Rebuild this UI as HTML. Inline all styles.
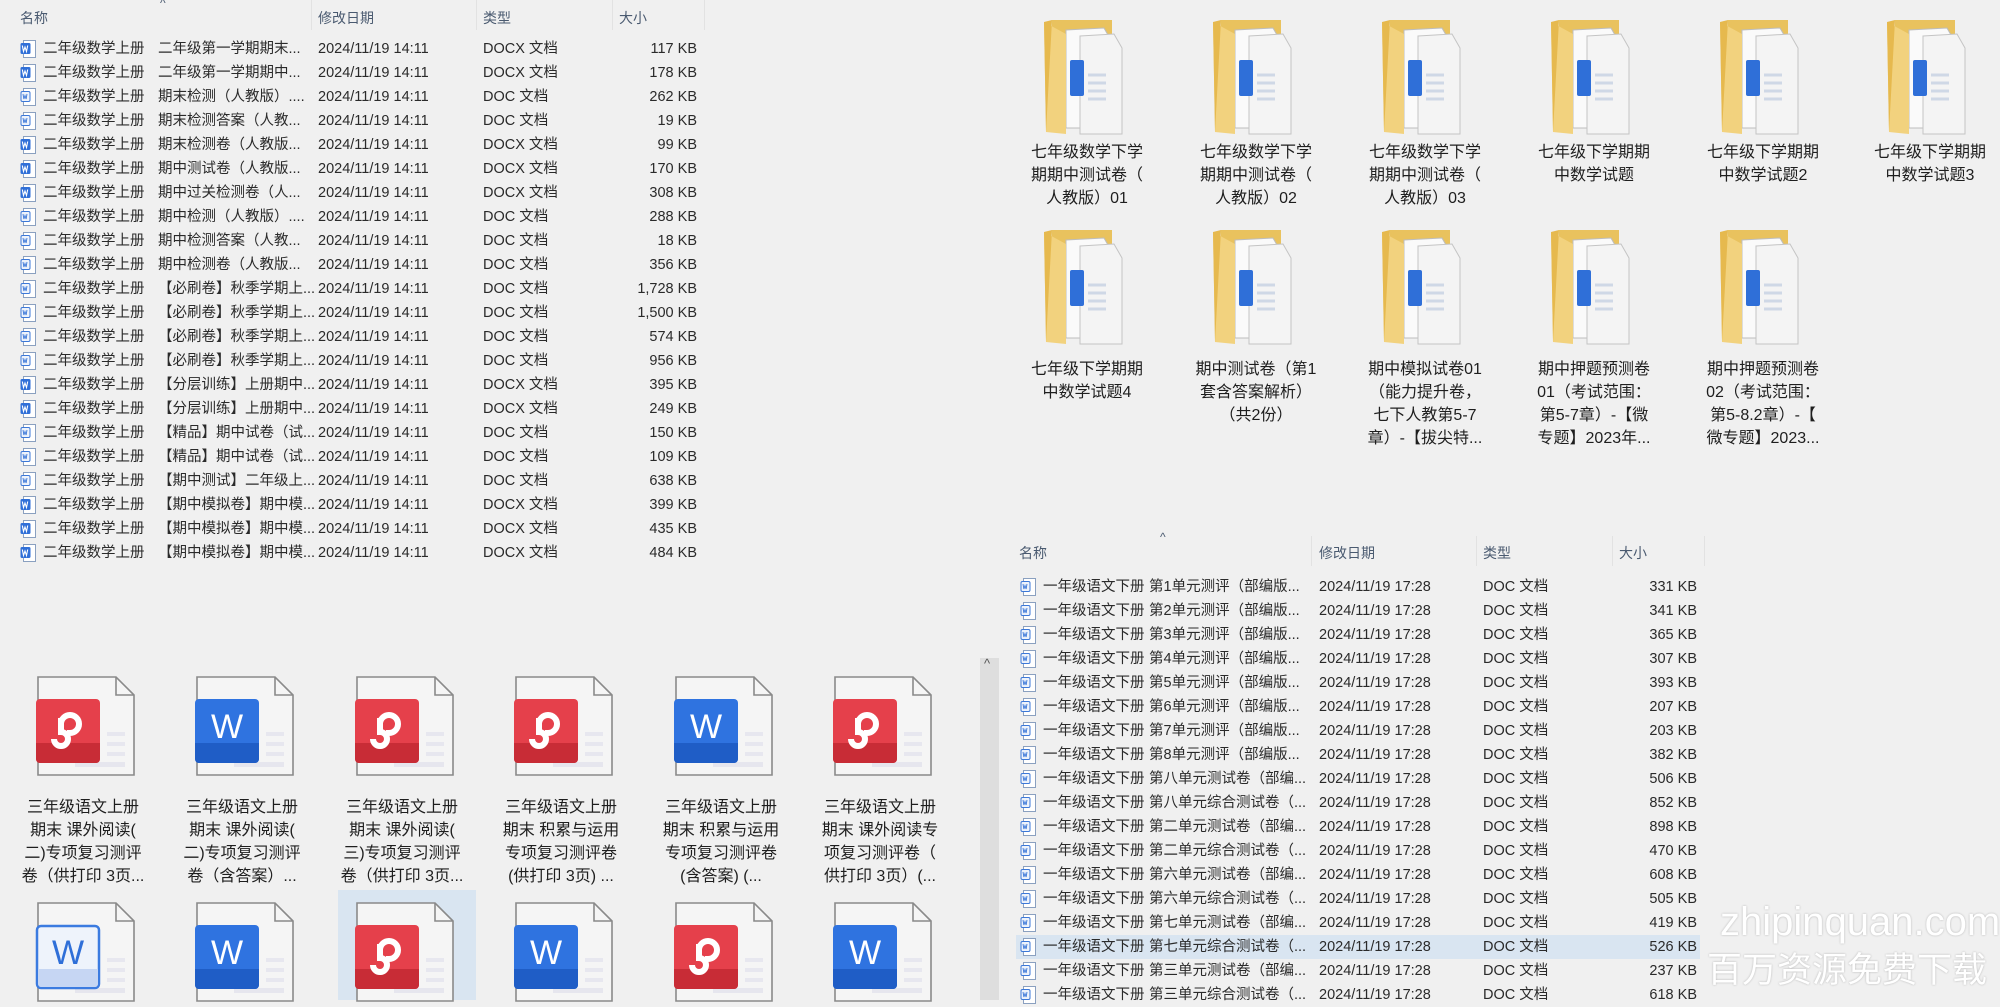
<!DOCTYPE html>
<html><head><meta charset="utf-8"><style>
body{margin:0;width:2000px;height:1000px;background:#f0f0f0;position:relative;overflow:hidden;font-family:"Liberation Sans","Noto Sans CJK SC",sans-serif;color:#222}
.a{position:absolute;white-space:nowrap}
.h{font-size:14px;color:#4a5a70}
.sep{position:absolute;width:1px;background:#e2e2e2}
.r{position:absolute;height:24px;line-height:24px;font-size:14.5px;color:#2a2a2a}
.r span{position:absolute;white-space:nowrap}
.r svg{position:absolute;top:3px}
.lbl{position:absolute;width:160px;text-align:center;font-size:16px;line-height:23px;color:#1e1e1e}
</style></head><body>
<svg width="0" height="0" style="position:absolute">
<defs>
<symbol id="dx" viewBox="0 0 16 18"><rect x="3.5" y="0.5" width="12" height="17" fill="#fff" stroke="#8aa0c0"/><rect x="0.5" y="3" width="10" height="11" rx="1.5" fill="#2f6fd8"/><path d="M2.3 5.5l1.2 6 1.5-4.5 1.5 4.5 1.2-6" stroke="#fff" stroke-width="1.1" fill="none"/></symbol>
<symbol id="dc" viewBox="0 0 16 18"><rect x="3.5" y="0.5" width="12" height="17" fill="#fff" stroke="#8aa0c0"/><rect x="1" y="3.5" width="9" height="10" rx="1.5" fill="#eef3fb" stroke="#3c78d8"/><path d="M3 6l.9 5 1.1-3.5 1.1 3.5.9-5" stroke="#3c78d8" stroke-width="0.9" fill="none"/></symbol>
<symbol id="fd" viewBox="0 0 86 115"><path d="M8 0h60v108H8z" fill="#e9c25e"/><path d="M22 10l38-2 8 14v86H22z" fill="#fafafa" stroke="#bdbdbd"/><path d="M36 16l34-2 8 14v86H36z" fill="#f4f4f4" stroke="#c4c4c4"/><rect x="26" y="40" width="14" height="36" rx="2" fill="#2f6fd8"/><path d="M44 55h18M44 63h18M44 71h18M44 79h18" stroke="#cfd8e6" stroke-width="3"/><path d="M0 2l22 12v100L2 112z" fill="#f2d27e"/><path d="M8 0L0 2l2 110z" fill="#e6b94e"/></symbol>
<symbol id="pg" viewBox="0 0 100 100"><path d="M3 1h78l18 18v80H3z" fill="#f5f5f5" stroke="#8a8a8a" stroke-width="1.6"/><path d="M81 1v18h18" fill="none" stroke="#8a8a8a" stroke-width="1.6"/><rect x="72" y="56" width="18" height="4" fill="#e7e7ef"/><rect x="72" y="66" width="18" height="4" fill="#e7e7ef"/><rect x="72" y="76" width="18" height="4" fill="#e7e7ef"/><rect x="40" y="86" width="50" height="5" fill="#e6e6ee"/></symbol>
<symbol id="bp" viewBox="0 0 100 100"><use href="#pg"/><rect x="1" y="23" width="64" height="64" rx="4" fill="#e5404b"/><path d="M1 67h64v16a4 4 0 0 1-4 4H5a4 4 0 0 1-4-4z" fill="#c82c36"/><path d="M26 48a9 9 0 1 1 9 9h-3M26 42v14a7 7 0 1 1-7 7" fill="none" stroke="#fff" stroke-width="6"/></symbol>
<symbol id="bw" viewBox="0 0 100 100"><use href="#pg"/><rect x="1" y="23" width="64" height="64" rx="4" fill="#2f73e0"/><path d="M1 67h64v16a4 4 0 0 1-4 4H5a4 4 0 0 1-4-4z" fill="#1f5dc6"/><text x="33" y="62" font-family="Liberation Sans" font-size="34" fill="#fff" text-anchor="middle">W</text></symbol>
<symbol id="bo" viewBox="0 0 100 100"><use href="#pg"/><rect x="2" y="24" width="62" height="62" rx="4" fill="#eef3fb" stroke="#3b7be0" stroke-width="2.5"/><path d="M3 67h60v15a3 3 0 0 1-3 3H6a3 3 0 0 1-3-3z" fill="#c6d6f3"/><text x="33" y="62" font-family="Liberation Sans" font-size="34" fill="#2f6fd8" text-anchor="middle">W</text></symbol>
</defs></svg>

<!-- top-left list -->
<div class="a h" style="left:20px;top:8px">名称</div>
<div class="a h" style="left:160px;top:-4px;font-size:12px">^</div>
<div class="a h" style="left:318px;top:8px">修改日期</div>
<div class="a h" style="left:483px;top:8px">类型</div>
<div class="a h" style="left:619px;top:8px">大小</div>
<div class="sep" style="left:311px;top:0;height:30px"></div>
<div class="sep" style="left:476px;top:0;height:30px"></div>
<div class="sep" style="left:612px;top:0;height:30px"></div>
<div class="sep" style="left:704px;top:0;height:30px"></div>

<div class="r" style="left:0;top:37px;width:710px"><svg style="left:20px" width="16" height="18"><use href="#dx"/></svg><span style="left:43px">二年级数学上册</span><span style="left:158px">二年级第一学期期末...</span><span style="left:318px">2024/11/19 14:11</span><span style="left:483px">DOCX 文档</span><span style="right:13px">117 KB</span></div>
<div class="r" style="left:0;top:61px;width:710px"><svg style="left:20px" width="16" height="18"><use href="#dx"/></svg><span style="left:43px">二年级数学上册</span><span style="left:158px">二年级第一学期期中...</span><span style="left:318px">2024/11/19 14:11</span><span style="left:483px">DOCX 文档</span><span style="right:13px">178 KB</span></div>
<div class="r" style="left:0;top:85px;width:710px"><svg style="left:20px" width="16" height="18"><use href="#dc"/></svg><span style="left:43px">二年级数学上册</span><span style="left:158px">期末检测（人教版）....</span><span style="left:318px">2024/11/19 14:11</span><span style="left:483px">DOC 文档</span><span style="right:13px">262 KB</span></div>
<div class="r" style="left:0;top:109px;width:710px"><svg style="left:20px" width="16" height="18"><use href="#dc"/></svg><span style="left:43px">二年级数学上册</span><span style="left:158px">期末检测答案（人教...</span><span style="left:318px">2024/11/19 14:11</span><span style="left:483px">DOC 文档</span><span style="right:13px">19 KB</span></div>
<div class="r" style="left:0;top:133px;width:710px"><svg style="left:20px" width="16" height="18"><use href="#dx"/></svg><span style="left:43px">二年级数学上册</span><span style="left:158px">期末检测卷（人教版...</span><span style="left:318px">2024/11/19 14:11</span><span style="left:483px">DOCX 文档</span><span style="right:13px">99 KB</span></div>
<div class="r" style="left:0;top:157px;width:710px"><svg style="left:20px" width="16" height="18"><use href="#dx"/></svg><span style="left:43px">二年级数学上册</span><span style="left:158px">期中测试卷（人教版...</span><span style="left:318px">2024/11/19 14:11</span><span style="left:483px">DOCX 文档</span><span style="right:13px">170 KB</span></div>
<div class="r" style="left:0;top:181px;width:710px"><svg style="left:20px" width="16" height="18"><use href="#dx"/></svg><span style="left:43px">二年级数学上册</span><span style="left:158px">期中过关检测卷（人...</span><span style="left:318px">2024/11/19 14:11</span><span style="left:483px">DOCX 文档</span><span style="right:13px">308 KB</span></div>
<div class="r" style="left:0;top:205px;width:710px"><svg style="left:20px" width="16" height="18"><use href="#dc"/></svg><span style="left:43px">二年级数学上册</span><span style="left:158px">期中检测（人教版）....</span><span style="left:318px">2024/11/19 14:11</span><span style="left:483px">DOC 文档</span><span style="right:13px">288 KB</span></div>
<div class="r" style="left:0;top:229px;width:710px"><svg style="left:20px" width="16" height="18"><use href="#dc"/></svg><span style="left:43px">二年级数学上册</span><span style="left:158px">期中检测答案（人教...</span><span style="left:318px">2024/11/19 14:11</span><span style="left:483px">DOC 文档</span><span style="right:13px">18 KB</span></div>
<div class="r" style="left:0;top:253px;width:710px"><svg style="left:20px" width="16" height="18"><use href="#dc"/></svg><span style="left:43px">二年级数学上册</span><span style="left:158px">期中检测卷（人教版...</span><span style="left:318px">2024/11/19 14:11</span><span style="left:483px">DOC 文档</span><span style="right:13px">356 KB</span></div>
<div class="r" style="left:0;top:277px;width:710px"><svg style="left:20px" width="16" height="18"><use href="#dc"/></svg><span style="left:43px">二年级数学上册</span><span style="left:158px">【必刷卷】秋季学期上...</span><span style="left:318px">2024/11/19 14:11</span><span style="left:483px">DOC 文档</span><span style="right:13px">1,728 KB</span></div>
<div class="r" style="left:0;top:301px;width:710px"><svg style="left:20px" width="16" height="18"><use href="#dc"/></svg><span style="left:43px">二年级数学上册</span><span style="left:158px">【必刷卷】秋季学期上...</span><span style="left:318px">2024/11/19 14:11</span><span style="left:483px">DOC 文档</span><span style="right:13px">1,500 KB</span></div>
<div class="r" style="left:0;top:325px;width:710px"><svg style="left:20px" width="16" height="18"><use href="#dc"/></svg><span style="left:43px">二年级数学上册</span><span style="left:158px">【必刷卷】秋季学期上...</span><span style="left:318px">2024/11/19 14:11</span><span style="left:483px">DOC 文档</span><span style="right:13px">574 KB</span></div>
<div class="r" style="left:0;top:349px;width:710px"><svg style="left:20px" width="16" height="18"><use href="#dc"/></svg><span style="left:43px">二年级数学上册</span><span style="left:158px">【必刷卷】秋季学期上...</span><span style="left:318px">2024/11/19 14:11</span><span style="left:483px">DOC 文档</span><span style="right:13px">956 KB</span></div>
<div class="r" style="left:0;top:373px;width:710px"><svg style="left:20px" width="16" height="18"><use href="#dx"/></svg><span style="left:43px">二年级数学上册</span><span style="left:158px">【分层训练】上册期中...</span><span style="left:318px">2024/11/19 14:11</span><span style="left:483px">DOCX 文档</span><span style="right:13px">395 KB</span></div>
<div class="r" style="left:0;top:397px;width:710px"><svg style="left:20px" width="16" height="18"><use href="#dx"/></svg><span style="left:43px">二年级数学上册</span><span style="left:158px">【分层训练】上册期中...</span><span style="left:318px">2024/11/19 14:11</span><span style="left:483px">DOCX 文档</span><span style="right:13px">249 KB</span></div>
<div class="r" style="left:0;top:421px;width:710px"><svg style="left:20px" width="16" height="18"><use href="#dc"/></svg><span style="left:43px">二年级数学上册</span><span style="left:158px">【精品】期中试卷（试...</span><span style="left:318px">2024/11/19 14:11</span><span style="left:483px">DOC 文档</span><span style="right:13px">150 KB</span></div>
<div class="r" style="left:0;top:445px;width:710px"><svg style="left:20px" width="16" height="18"><use href="#dc"/></svg><span style="left:43px">二年级数学上册</span><span style="left:158px">【精品】期中试卷（试...</span><span style="left:318px">2024/11/19 14:11</span><span style="left:483px">DOC 文档</span><span style="right:13px">109 KB</span></div>
<div class="r" style="left:0;top:469px;width:710px"><svg style="left:20px" width="16" height="18"><use href="#dc"/></svg><span style="left:43px">二年级数学上册</span><span style="left:158px">【期中测试】二年级上...</span><span style="left:318px">2024/11/19 14:11</span><span style="left:483px">DOC 文档</span><span style="right:13px">638 KB</span></div>
<div class="r" style="left:0;top:493px;width:710px"><svg style="left:20px" width="16" height="18"><use href="#dx"/></svg><span style="left:43px">二年级数学上册</span><span style="left:158px">【期中模拟卷】期中模...</span><span style="left:318px">2024/11/19 14:11</span><span style="left:483px">DOCX 文档</span><span style="right:13px">399 KB</span></div>
<div class="r" style="left:0;top:517px;width:710px"><svg style="left:20px" width="16" height="18"><use href="#dx"/></svg><span style="left:43px">二年级数学上册</span><span style="left:158px">【期中模拟卷】期中模...</span><span style="left:318px">2024/11/19 14:11</span><span style="left:483px">DOCX 文档</span><span style="right:13px">435 KB</span></div>
<div class="r" style="left:0;top:541px;width:710px"><svg style="left:20px" width="16" height="18"><use href="#dx"/></svg><span style="left:43px">二年级数学上册</span><span style="left:158px">【期中模拟卷】期中模...</span><span style="left:318px">2024/11/19 14:11</span><span style="left:483px">DOCX 文档</span><span style="right:13px">484 KB</span></div>

<!-- top-right folders -->
<svg class="a" style="left:1044px;top:20px" width="86" height="115"><use href="#fd"/></svg>
<svg class="a" style="left:1213px;top:20px" width="86" height="115"><use href="#fd"/></svg>
<svg class="a" style="left:1382px;top:20px" width="86" height="115"><use href="#fd"/></svg>
<svg class="a" style="left:1551px;top:20px" width="86" height="115"><use href="#fd"/></svg>
<svg class="a" style="left:1720px;top:20px" width="86" height="115"><use href="#fd"/></svg>
<svg class="a" style="left:1887px;top:20px" width="86" height="115"><use href="#fd"/></svg>
<div class="lbl" style="left:1007px;top:141px">七年级数学下学<br>期期中测试卷（<br>人教版）01</div>
<div class="lbl" style="left:1176px;top:141px">七年级数学下学<br>期期中测试卷（<br>人教版）02</div>
<div class="lbl" style="left:1345px;top:141px">七年级数学下学<br>期期中测试卷（<br>人教版）03</div>
<div class="lbl" style="left:1514px;top:141px">七年级下学期期<br>中数学试题</div>
<div class="lbl" style="left:1683px;top:141px">七年级下学期期<br>中数学试题2</div>
<div class="lbl" style="left:1850px;top:141px">七年级下学期期<br>中数学试题3</div>

<svg class="a" style="left:1044px;top:230px" width="86" height="115"><use href="#fd"/></svg>
<svg class="a" style="left:1213px;top:230px" width="86" height="115"><use href="#fd"/></svg>
<svg class="a" style="left:1382px;top:230px" width="86" height="115"><use href="#fd"/></svg>
<svg class="a" style="left:1551px;top:230px" width="86" height="115"><use href="#fd"/></svg>
<svg class="a" style="left:1720px;top:230px" width="86" height="115"><use href="#fd"/></svg>
<div class="lbl" style="left:1007px;top:358px">七年级下学期期<br>中数学试题4</div>
<div class="lbl" style="left:1176px;top:358px">期中测试卷（第1<br>套含答案解析）<br>（共2份）</div>
<div class="lbl" style="left:1345px;top:358px">期中模拟试卷01<br>（能力提升卷，<br>七下人教第5-7<br>章）-【拔尖特...</div>
<div class="lbl" style="left:1514px;top:358px">期中押题预测卷<br>01（考试范围：<br>第5-7章）-【微<br>专题】2023年...</div>
<div class="lbl" style="left:1683px;top:358px">期中押题预测卷<br>02（考试范围：<br>第5-8.2章）-【<br>微专题】2023...</div>

<!-- bottom-right list -->
<div class="a h" style="left:1019px;top:543px">名称</div>
<div class="a h" style="left:1160px;top:530px;font-size:12px">^</div>
<div class="a h" style="left:1319px;top:543px">修改日期</div>
<div class="a h" style="left:1483px;top:543px">类型</div>
<div class="a h" style="left:1619px;top:543px">大小</div>
<div class="sep" style="left:1311px;top:536px;height:30px"></div>
<div class="sep" style="left:1476px;top:536px;height:30px"></div>
<div class="sep" style="left:1612px;top:536px;height:30px"></div>
<div class="sep" style="left:1704px;top:536px;height:30px"></div>
<div class="a" style="left:1016px;top:935px;width:684px;height:24px;background:#d9e5f1"></div>

<div class="r" style="left:1000px;top:575px;width:710px"><svg style="left:20px" width="16" height="18"><use href="#dc"/></svg><span style="left:43px">一年级语文下册</span><span style="left:149px">第1单元测评（部编版...</span><span style="left:319px">2024/11/19 17:28</span><span style="left:483px">DOC 文档</span><span style="right:13px">331 KB</span></div>
<div class="r" style="left:1000px;top:599px;width:710px"><svg style="left:20px" width="16" height="18"><use href="#dc"/></svg><span style="left:43px">一年级语文下册</span><span style="left:149px">第2单元测评（部编版...</span><span style="left:319px">2024/11/19 17:28</span><span style="left:483px">DOC 文档</span><span style="right:13px">341 KB</span></div>
<div class="r" style="left:1000px;top:623px;width:710px"><svg style="left:20px" width="16" height="18"><use href="#dc"/></svg><span style="left:43px">一年级语文下册</span><span style="left:149px">第3单元测评（部编版...</span><span style="left:319px">2024/11/19 17:28</span><span style="left:483px">DOC 文档</span><span style="right:13px">365 KB</span></div>
<div class="r" style="left:1000px;top:647px;width:710px"><svg style="left:20px" width="16" height="18"><use href="#dc"/></svg><span style="left:43px">一年级语文下册</span><span style="left:149px">第4单元测评（部编版...</span><span style="left:319px">2024/11/19 17:28</span><span style="left:483px">DOC 文档</span><span style="right:13px">307 KB</span></div>
<div class="r" style="left:1000px;top:671px;width:710px"><svg style="left:20px" width="16" height="18"><use href="#dc"/></svg><span style="left:43px">一年级语文下册</span><span style="left:149px">第5单元测评（部编版...</span><span style="left:319px">2024/11/19 17:28</span><span style="left:483px">DOC 文档</span><span style="right:13px">393 KB</span></div>
<div class="r" style="left:1000px;top:695px;width:710px"><svg style="left:20px" width="16" height="18"><use href="#dc"/></svg><span style="left:43px">一年级语文下册</span><span style="left:149px">第6单元测评（部编版...</span><span style="left:319px">2024/11/19 17:28</span><span style="left:483px">DOC 文档</span><span style="right:13px">207 KB</span></div>
<div class="r" style="left:1000px;top:719px;width:710px"><svg style="left:20px" width="16" height="18"><use href="#dc"/></svg><span style="left:43px">一年级语文下册</span><span style="left:149px">第7单元测评（部编版...</span><span style="left:319px">2024/11/19 17:28</span><span style="left:483px">DOC 文档</span><span style="right:13px">203 KB</span></div>
<div class="r" style="left:1000px;top:743px;width:710px"><svg style="left:20px" width="16" height="18"><use href="#dc"/></svg><span style="left:43px">一年级语文下册</span><span style="left:149px">第8单元测评（部编版...</span><span style="left:319px">2024/11/19 17:28</span><span style="left:483px">DOC 文档</span><span style="right:13px">382 KB</span></div>
<div class="r" style="left:1000px;top:767px;width:710px"><svg style="left:20px" width="16" height="18"><use href="#dc"/></svg><span style="left:43px">一年级语文下册</span><span style="left:149px">第八单元测试卷（部编...</span><span style="left:319px">2024/11/19 17:28</span><span style="left:483px">DOC 文档</span><span style="right:13px">506 KB</span></div>
<div class="r" style="left:1000px;top:791px;width:710px"><svg style="left:20px" width="16" height="18"><use href="#dc"/></svg><span style="left:43px">一年级语文下册</span><span style="left:149px">第八单元综合测试卷（...</span><span style="left:319px">2024/11/19 17:28</span><span style="left:483px">DOC 文档</span><span style="right:13px">852 KB</span></div>
<div class="r" style="left:1000px;top:815px;width:710px"><svg style="left:20px" width="16" height="18"><use href="#dc"/></svg><span style="left:43px">一年级语文下册</span><span style="left:149px">第二单元测试卷（部编...</span><span style="left:319px">2024/11/19 17:28</span><span style="left:483px">DOC 文档</span><span style="right:13px">898 KB</span></div>
<div class="r" style="left:1000px;top:839px;width:710px"><svg style="left:20px" width="16" height="18"><use href="#dc"/></svg><span style="left:43px">一年级语文下册</span><span style="left:149px">第二单元综合测试卷（...</span><span style="left:319px">2024/11/19 17:28</span><span style="left:483px">DOC 文档</span><span style="right:13px">470 KB</span></div>
<div class="r" style="left:1000px;top:863px;width:710px"><svg style="left:20px" width="16" height="18"><use href="#dc"/></svg><span style="left:43px">一年级语文下册</span><span style="left:149px">第六单元测试卷（部编...</span><span style="left:319px">2024/11/19 17:28</span><span style="left:483px">DOC 文档</span><span style="right:13px">608 KB</span></div>
<div class="r" style="left:1000px;top:887px;width:710px"><svg style="left:20px" width="16" height="18"><use href="#dc"/></svg><span style="left:43px">一年级语文下册</span><span style="left:149px">第六单元综合测试卷（...</span><span style="left:319px">2024/11/19 17:28</span><span style="left:483px">DOC 文档</span><span style="right:13px">505 KB</span></div>
<div class="r" style="left:1000px;top:911px;width:710px"><svg style="left:20px" width="16" height="18"><use href="#dc"/></svg><span style="left:43px">一年级语文下册</span><span style="left:149px">第七单元测试卷（部编...</span><span style="left:319px">2024/11/19 17:28</span><span style="left:483px">DOC 文档</span><span style="right:13px">419 KB</span></div>
<div class="r" style="left:1000px;top:935px;width:710px"><svg style="left:20px" width="16" height="18"><use href="#dc"/></svg><span style="left:43px">一年级语文下册</span><span style="left:149px">第七单元综合测试卷（...</span><span style="left:319px">2024/11/19 17:28</span><span style="left:483px">DOC 文档</span><span style="right:13px">526 KB</span></div>
<div class="r" style="left:1000px;top:959px;width:710px"><svg style="left:20px" width="16" height="18"><use href="#dc"/></svg><span style="left:43px">一年级语文下册</span><span style="left:149px">第三单元测试卷（部编...</span><span style="left:319px">2024/11/19 17:28</span><span style="left:483px">DOC 文档</span><span style="right:13px">237 KB</span></div>
<div class="r" style="left:1000px;top:983px;width:710px"><svg style="left:20px" width="16" height="18"><use href="#dc"/></svg><span style="left:43px">一年级语文下册</span><span style="left:149px">第三单元综合测试卷（...</span><span style="left:319px">2024/11/19 17:28</span><span style="left:483px">DOC 文档</span><span style="right:13px">618 KB</span></div>

<!-- bottom-left big icons -->
<div class="a" style="left:338px;top:890px;width:138px;height:110px;background:#d9e5f1"></div>
<svg class="a" style="left:35px;top:676px" width="100" height="100"><use href="#bp"/></svg>
<svg class="a" style="left:194px;top:676px" width="100" height="100"><use href="#bw"/></svg>
<svg class="a" style="left:354px;top:676px" width="100" height="100"><use href="#bp"/></svg>
<svg class="a" style="left:513px;top:676px" width="100" height="100"><use href="#bp"/></svg>
<svg class="a" style="left:673px;top:676px" width="100" height="100"><use href="#bw"/></svg>
<svg class="a" style="left:832px;top:676px" width="100" height="100"><use href="#bp"/></svg>
<div class="lbl" style="left:3px;top:796px">三年级语文上册<br>期末 课外阅读(<br>二)专项复习测评<br>卷（供打印 3页...</div>
<div class="lbl" style="left:162px;top:796px">三年级语文上册<br>期末 课外阅读(<br>二)专项复习测评<br>卷（含答案）...</div>
<div class="lbl" style="left:322px;top:796px">三年级语文上册<br>期末 课外阅读(<br>三)专项复习测评<br>卷（供打印 3页...</div>
<div class="lbl" style="left:481px;top:796px">三年级语文上册<br>期末 积累与运用<br>专项复习测评卷<br>(供打印 3页) ...</div>
<div class="lbl" style="left:641px;top:796px">三年级语文上册<br>期末 积累与运用<br>专项复习测评卷<br>(含答案) (...</div>
<div class="lbl" style="left:800px;top:796px">三年级语文上册<br>期末 课外阅读专<br>项复习测评卷（<br>供打印 3页）(...</div>
<svg class="a" style="left:35px;top:902px" width="100" height="100"><use href="#bo"/></svg>
<svg class="a" style="left:194px;top:902px" width="100" height="100"><use href="#bw"/></svg>
<svg class="a" style="left:354px;top:902px" width="100" height="100"><use href="#bp"/></svg>
<svg class="a" style="left:513px;top:902px" width="100" height="100"><use href="#bw"/></svg>
<svg class="a" style="left:673px;top:902px" width="100" height="100"><use href="#bp"/></svg>
<svg class="a" style="left:832px;top:902px" width="100" height="100"><use href="#bw"/></svg>

<!-- scrollbar -->
<div class="a" style="left:980px;top:658px;width:19px;height:342px;background:#dedede"></div>
<div class="a" style="left:984px;top:656px;font-size:13px;color:#555">^</div>

<!-- watermark -->
<div class="a" style="left:1720px;top:900px;font-size:40px;color:#fff;text-shadow:0 0 2px rgba(0,0,0,.25)">zhipinquan.com</div>
<div class="a" style="left:1707px;top:950px;font-size:35px;line-height:42px;color:#fff;text-shadow:0 0 2px rgba(0,0,0,.25)">百万资源免费下载</div>
</body></html>
